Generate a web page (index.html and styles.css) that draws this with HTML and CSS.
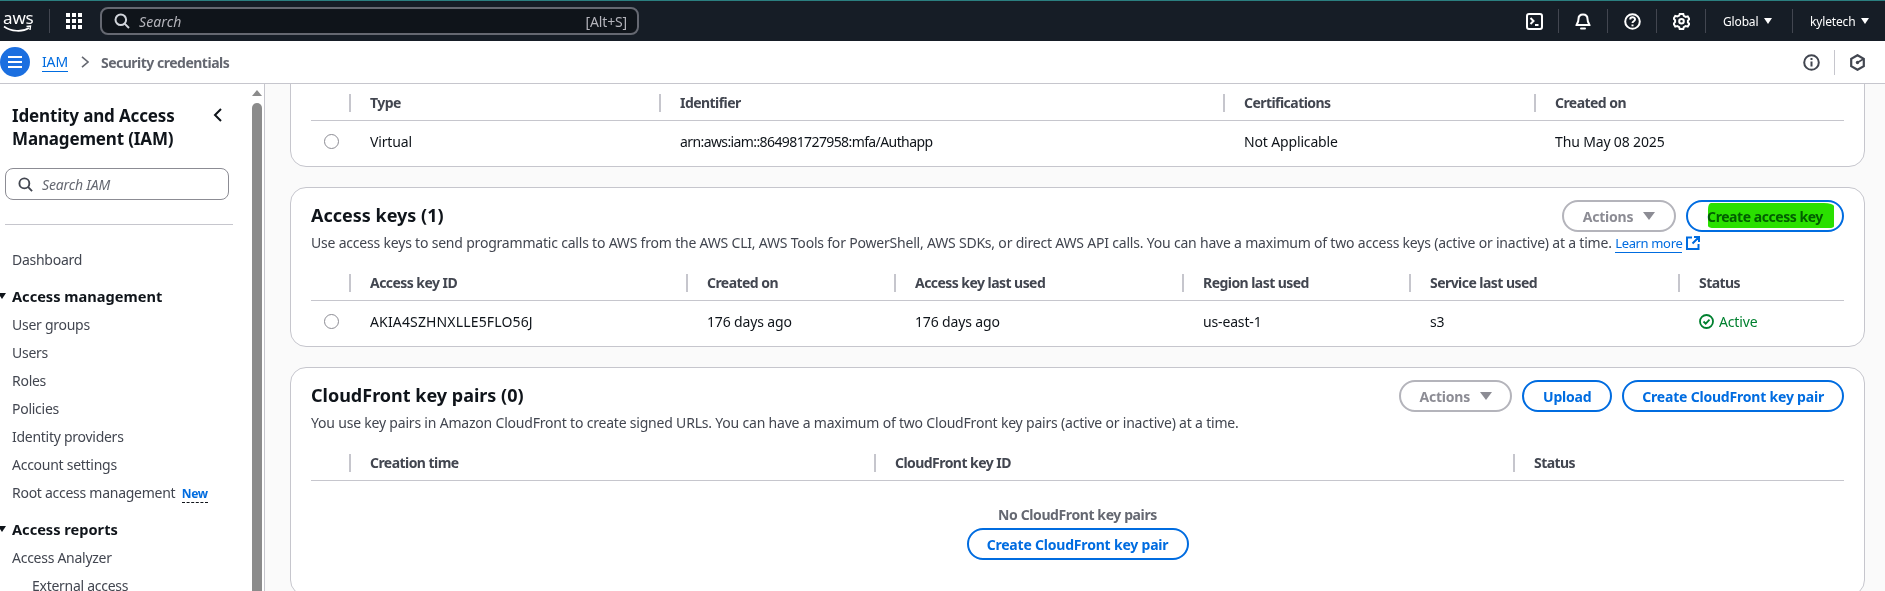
FILE: index.html
```html
<!DOCTYPE html>
<html lang="en">
<head>
  <meta charset="UTF-8">
  <title>Security credentials | IAM</title>
  <meta name="viewport" content="width=device-width, initial-scale=1.0">
  <link rel="stylesheet" href="styles.css">
</head>
<body>
  <header class="topbar">
    <div class="logo">
      <span class="logo-text">aws</span>
      <svg class="logo-smile" width="30" height="8" viewBox="0 0 30 8"><path d="M1 1.500c7 5 18 6 25 1.500" fill="none" stroke="#fff" stroke-width="1.600"/><path d="M23.500 1.500 27.500 1 27 5" fill="none" stroke="#fff" stroke-width="1.400"/></svg>
    </div>
    <span class="top-divider logo-divider"></span>
    <svg class="apps" width="16" height="16" viewBox="0 0 16 16" fill="#fff">
      <rect width="4" height="4"/><rect x="6" width="4" height="4"/><rect x="12" width="4" height="4"/>
      <rect y="6" width="4" height="4"/><rect x="6" y="6" width="4" height="4"/><rect x="12" y="6" width="4" height="4"/>
      <rect y="12" width="4" height="4"/><rect x="6" y="12" width="4" height="4"/><rect x="12" y="12" width="4" height="4"/>
    </svg>
    <div class="top-search">
      <svg width="16" height="16" viewBox="0 0 16 16" fill="none" stroke="#d1d5db" stroke-width="2"><circle cx="6.800" cy="6.800" r="5.300"/><path d="m10.600 10.600 4.400 4.400"/></svg>
      <span class="top-search-text">Search</span>
      <span class="top-search-key">[Alt+S]</span>
    </div>
    <div class="top-icons">
      <span class="top-icon">
        <svg width="17" height="17" viewBox="0 0 17 17" fill="none" stroke="#fff" stroke-width="2"><rect x="1" y="1" width="15" height="15" rx="2"/><path d="m4.500 5 3 3-3 3M9 12h3.500"/></svg>
      </span>
      <span class="top-divider"></span>
      <span class="top-icon">
        <svg width="16" height="17" viewBox="0 0 16 17" fill="none" stroke="#fff" stroke-width="2"><path d="M8 1.500c-3 0-4.500 2-4.500 4.500 0 3.500-2 5.500-2 6h13c0-.5-2-2.500-2-6 0-2.500-1.500-4.500-4.500-4.500Z"/><path d="M6 15.500h4" stroke-linecap="round"/></svg>
      </span>
      <span class="top-divider"></span>
      <span class="top-icon">
        <svg width="17" height="17" viewBox="0 0 17 17" fill="none" stroke="#fff" stroke-width="2"><circle cx="8.500" cy="8.500" r="7.300"/><path d="M6.200 6.500c0-3 4.800-3 4.800-.1 0 1.800-2.500 1.800-2.500 3.600"/><path d="M8.500 11.500v1.800"/></svg>
      </span>
      <span class="top-divider"></span>
      <span class="top-icon">
        <svg width="17" height="17" viewBox="0 0 17 17" fill="none" stroke="#fff" stroke-width="2"><path d="m6.700 1.200h3.600l.5 2 1.900 1 2-.6 1.700 3-1.500 1.400v2l1.500 1.400-1.700 3-2-.6-1.900 1-.5 2H6.700l-.5-2-1.900-1-2 .6-1.700-3L2.100 9.500v-2L.6 6.100l1.700-3 2 .6 1.900-1z" transform="translate(0 -.1) scale(1 .96)"/><circle cx="8.500" cy="8.200" r="2.300"/></svg>
      </span>
      <span class="top-divider"></span>
      <span class="top-menu region-menu">Global<span class="caret"></span></span>
      <span class="top-divider"></span>
      <span class="top-menu user-menu">kyletech<span class="caret"></span></span>
    </div>
  </header>

  <nav class="crumbbar">
    <span class="menu-btn">
      <svg width="16" height="14" viewBox="0 0 16 14" fill="none" stroke="#fff" stroke-width="2.200"><path d="M1 2h14M1 7h14M1 12h14"/></svg>
    </span>
    <a class="crumb-link">IAM</a>
    <svg class="crumb-sep" width="8" height="12" viewBox="0 0 8 12" fill="none" stroke="#656871" stroke-width="1.600"><path d="m1 .8 6 5.200-6 5.200"/></svg>
    <span class="crumb-current">Security credentials</span>
    <span class="crumb-tools">
      <svg width="17" height="17" viewBox="0 0 17 17" fill="none" stroke="#424650" stroke-width="2"><circle cx="8.500" cy="8.500" r="7.300"/><path d="M8.500 7.500v5M8.500 4v2"/></svg>
      <span class="tool-divider"></span>
      <svg width="15" height="17" viewBox="0 0 15 17" fill="none" stroke="#424650" stroke-width="2.200"><path d="M7.500 1.200 13.800 4.800v7.400l-6.300 3.600-6.300-3.600V4.800z"/><circle cx="7.500" cy="8.500" r="1.700" fill="#424650" stroke="none"/><path d="M7.500 8.500 13.500 5" stroke-width="1.600"/></svg>
    </span>
  </nav>

  <div class="workspace">
    <aside class="sidebar">
      <div class="side-content">
        <div class="side-head">
          <h2>Identity and Access Management (IAM)</h2>
          <svg width="10" height="14" viewBox="0 0 10 14" fill="none" stroke="#0f141a" stroke-width="2"><path d="M8 1 2 7l6 6"/></svg>
        </div>
        <div class="side-search">
          <svg width="15" height="15" viewBox="0 0 16 16" fill="none" stroke="#424650" stroke-width="2"><circle cx="6.800" cy="6.800" r="5.300"/><path d="m10.600 10.600 4.400 4.400"/></svg>
          <span>Search IAM</span>
        </div>
        <hr class="side-rule">
        <a class="side-link side-first">Dashboard</a>
        <div class="side-group">Access management</div>
        <a class="side-link">User groups</a>
        <a class="side-link">Users</a>
        <a class="side-link">Roles</a>
        <a class="side-link">Policies</a>
        <a class="side-link">Identity providers</a>
        <a class="side-link">Account settings</a>
        <a class="side-link">Root access management <span class="new-tag">New</span></a>
        <div class="side-group">Access reports</div>
        <a class="side-link">Access Analyzer</a>
        <a class="side-link side-sub">External access</a>
      </div>
      <div class="scrollbar">
        <span class="scroll-up"></span>
        <span class="scroll-thumb"></span>
      </div>
    </aside>

    <main class="main">
      <section class="card card-mfa">
        <div class="tbl cols-mfa">
          <div class="th"></div>
          <div class="th sep">Type</div>
          <div class="th sep">Identifier</div>
          <div class="th sep">Certifications</div>
          <div class="th sep">Created on</div>
          <div class="td"><span class="radio"></span></div>
          <div class="td">Virtual</div>
          <div class="td td-arn">arn:aws:iam::864981727958:mfa/Authapp</div>
          <div class="td">Not Applicable</div>
          <div class="td">Thu May 08 2025</div>
        </div>
      </section>

      <section class="card">
        <div class="card-head">
          <h3>Access keys (1)</h3>
          <div class="actions">
            <button class="btn btn-off btn-actions-wide">Actions<span class="caret caret-off"></span></button>
            <button class="btn btn-key">Create access key<span class="marker"></span></button>
          </div>
        </div>
        <p class="desc">Use access keys to send programmatic calls to AWS from the AWS CLI, AWS Tools for PowerShell, AWS SDKs, or direct AWS API calls. You can have a maximum of two access keys (active or inactive) at a time. <a class="learn">Learn more</a>
          <svg class="ext" width="14" height="14" viewBox="0 0 14 14" fill="none" stroke="#006ce0" stroke-width="2"><path d="M6 1.500H1v11.500h11.500V8M8 1h5v5M13 1 6.500 7.500"/></svg>
        </p>
        <div class="tbl cols-keys">
          <div class="th"></div>
          <div class="th sep">Access key ID</div>
          <div class="th sep">Created on</div>
          <div class="th sep">Access key last used</div>
          <div class="th sep">Region last used</div>
          <div class="th sep">Service last used</div>
          <div class="th sep">Status</div>
          <div class="td"><span class="radio"></span></div>
          <div class="td td-key">AKIA4SZHNXLLE5FLO56J</div>
          <div class="td">176 days ago</div>
          <div class="td">176 days ago</div>
          <div class="td">us-east-1</div>
          <div class="td">s3</div>
          <div class="td status">
            <svg width="15" height="15" viewBox="0 0 15 15" fill="none" stroke="#00802f" stroke-width="1.800"><circle cx="7.500" cy="7.500" r="6.500"/><path d="m4.500 7.500 2.200 2.200 3.800-4"/></svg>
            Active
          </div>
        </div>
      </section>

      <section class="card">
        <div class="card-head">
          <h3>CloudFront key pairs (0)</h3>
          <div class="actions">
            <button class="btn btn-off">Actions<span class="caret caret-off"></span></button>
            <button class="btn btn-upload">Upload</button>
            <button class="btn">Create CloudFront key pair</button>
          </div>
        </div>
        <p class="desc">You use key pairs in Amazon CloudFront to create signed URLs. You can have a maximum of two CloudFront key pairs (active or inactive) at a time.</p>
        <div class="tbl cols-cf">
          <div class="th"></div>
          <div class="th sep">Creation time</div>
          <div class="th sep">CloudFront key ID</div>
          <div class="th sep">Status</div>
        </div>
        <div class="empty">
          <strong>No CloudFront key pairs</strong>
          <button class="btn">Create CloudFront key pair</button>
        </div>
      </section>
    </main>
  </div>
</body>
</html>
```

FILE: styles.css
```css
* { box-sizing: border-box; }
html, body { height: 100%; }
body { margin: 0; height: 591px; overflow: hidden; display: flex; flex-direction: column; font-family: "Noto Sans", "Open Sans", Arial, sans-serif; font-size: 14px; letter-spacing: -.15px; color: #0f141a; background: #fff; }

/* top bar */
.topbar { height: 41px; flex: none; display: flex; align-items: center; background: #161d26; border-top: 1px solid #2b7f80; color: #fff; }
.logo { width: 30px; margin-left: 3px; height: 24px; position: relative; }
.logo-text { display: block; font-size: 17px; line-height: 17px; text-align: center; color: #fff; }
.logo-smile { position: absolute; left: 0; top: 16px; }
.top-divider { width: 1px; height: 24px; background: #424650; flex: none; }
.logo-divider { margin-left: 16px; }
.apps { margin-left: 16px; flex: none; }
.top-search { width: 539px; height: 28px; margin-left: 18px; display: flex; align-items: center; padding: 0 10px 0 12px; background: #0f141a; border: 2px solid #656871; border-radius: 8px; }
.top-search-text { margin-left: 9px; font-style: italic; color: #b4b4bb; font-size: 14px; letter-spacing: .1px; }
.top-search-key { margin-left: auto; color: #b4b4bb; font-size: 14px; }
.top-icons { margin-left: auto; display: flex; align-items: center; }
.top-icon { width: 48px; display: flex; justify-content: center; align-items: center; }
.top-menu { display: flex; align-items: center; font-size: 12px; color: #fff; }
.region-menu { width: 86px; padding-left: 17px; }
.user-menu { width: 92px; padding-left: 17px; }
.caret { width: 0; height: 0; margin-left: 6px; border-left: 4.5px solid transparent; border-right: 4.5px solid transparent; border-top: 6px solid #fff; }

/* breadcrumbs */
.crumbbar { height: 43px; flex: none; display: flex; align-items: center; background: #fff; border-bottom: 1px solid #c6c6cd; }
.menu-btn { width: 30px; height: 30px; display: flex; justify-content: center; align-items: center; border-radius: 50%; background: #1b6fe0; }
.crumb-link { margin-left: 12px; color: #006ce0; border-bottom: 1px solid #006ce0; line-height: 19px; }
.crumb-sep { margin-left: 13px; }
.crumb-current { margin-left: 12px; font-weight: 700; color: #656871; letter-spacing: -.5px; }
.crumb-tools { margin-left: auto; padding-right: 20px; display: flex; align-items: center; }
.tool-divider { width: 1px; height: 25px; margin: 0 15px 0 14px; background: #c6c6cd; }

/* sidebar */
.workspace { flex: 1; min-height: 0; display: flex; }
.sidebar { width: 265px; flex: none; display: flex; background: #fff; border-right: 1px solid #c6c6cd; overflow: hidden; }
.side-content { width: 252px; flex: none; padding-top: 20px; }
.side-head { display: flex; justify-content: space-between; align-items: flex-start; padding: 0 29px 0 12px; }
.side-head h2 { margin: 0; font-size: 17px; line-height: 23px; font-weight: 700; width: 180px; }
.side-head svg { margin-top: 4px; }
.side-search { width: 224px; height: 32px; margin: 18px 0 0 5px; display: flex; align-items: center; gap: 9px; padding-left: 12px; border: 1px solid #8c8c94; border-radius: 8px; font-style: italic; color: #656871; }
.side-rule { height: 1px; margin: 24px 19px 0 5px; border: 0; background: #c6c6cd; }
.side-link { display: block; height: 28px; line-height: 28px; padding-left: 12px; color: #424650; white-space: nowrap; letter-spacing: -.27px; }
.side-first { margin-top: 21px; }
.side-group { position: relative; height: 29px; line-height: 28px; margin-top: 8px; padding-left: 12px; font-size: 14.6px; font-weight: 700; white-space: nowrap; letter-spacing: 0; }
.side-group::before { content: ""; position: absolute; left: -2px; top: 11px; border-left: 4px solid transparent; border-right: 4px solid transparent; border-top: 6px solid #0f141a; }
.side-sub { padding-left: 32px; }
.new-tag { margin-left: 3px; color: #006ce0; font-size: 12px; font-weight: 700; border-bottom: 1px dashed #0f141a; }

.scrollbar { width: 10px; flex: none; display: flex; flex-direction: column; align-items: center; }
.scroll-up { margin-top: 6px; border-left: 5px solid transparent; border-right: 5px solid transparent; border-bottom: 6px solid #8b8b8b; }
.scroll-thumb { width: 10px; flex: 1; margin-top: 7px; background: #8b8b8b; border-radius: 5px 5px 0 0; }

/* main column */
.main { flex: 1; min-width: 0; overflow: hidden; padding: 0 20px 0 25px; background: #fafafa; }
.card { padding: 0 20px 5px; margin-bottom: 20px; background: #fff; border: 1px solid #c6c6cd; border-radius: 16px; }
.card-mfa { margin-top: -30px; padding-top: 26px; height: 113px; }
.card-head { height: 45px; padding-top: 12px; display: flex; justify-content: space-between; align-items: flex-start; }
.card-head h3 { margin: 0; padding-top: 3px; font-size: 18px; line-height: 24px; font-weight: 700; letter-spacing: 0; }
.actions { display: flex; gap: 10px; }
.btn { height: 32px; padding: 0 18px; display: inline-flex; align-items: center; justify-content: center; background: #fff; border: 2px solid #006ce0; border-radius: 20px; color: #006ce0; font: 700 14px "Noto Sans", "Open Sans", Arial, sans-serif; letter-spacing: -.2px; white-space: nowrap; }
.btn-off { width: 113px; padding: 0; border-color: #b4b4bb; color: #8c8c94; }
.btn-actions-wide { width: 114px; }
.btn-upload { width: 90px; padding: 0; }
.caret-off { margin-left: 10px; border-left-width: 6px; border-right-width: 6px; border-top: 8px solid #8c8c94; }
.btn-key { position: relative; width: 158px; padding: 0; letter-spacing: -.45px; }
.marker { position: absolute; left: 20px; top: 1px; width: 126px; height: 25px; background: #2ae000; border-radius: 3px 10px 5px 6px / 6px 3px 2px 2px; mix-blend-mode: multiply; }
.desc { margin: 0; height: 28px; line-height: 20px; color: #424650; white-space: nowrap; letter-spacing: -.2px; }
.learn { color: #006ce0; font-size: 13px; letter-spacing: -.35px; border-bottom: 1px solid #006ce0; }
.ext { vertical-align: -2px; }

/* tables */
.tbl { display: grid; margin: 0; }
.cols-mfa { grid-template-columns: 38px 310px 564px 311px 1fr; }
.cols-keys { grid-template-columns: 38px 337px 208px 288px 227px 269px 1fr; }
.cols-cf { grid-template-columns: 38px 525px 639px 1fr; }
.th { position: relative; height: 40px; padding: 3px 0 0 21px; display: flex; align-items: center; font-weight: 700; letter-spacing: -.55px; color: #424650; border-bottom: 1px solid #c6c6cd; white-space: nowrap; }
.th.sep::before { content: ""; position: absolute; left: 0; top: 13px; width: 2px; height: 18px; background: #c6c6cd; }
.td { height: 40px; padding-left: 21px; display: flex; align-items: center; white-space: nowrap; }
.td:has(.radio) { padding-left: 13px; }
.td-arn { letter-spacing: -.6px; }
.td-key { letter-spacing: .15px; }
.radio { width: 15px; height: 15px; border: 1px solid #8c8c94; border-radius: 50%; background: #fff; }
.status { gap: 5px; color: #00802f; }

.empty { height: 109px; padding-top: 24px; display: flex; flex-direction: column; align-items: center; gap: 3px; }
.empty strong { line-height: 20px; color: #656871; letter-spacing: -.4px; }
.empty .btn { width: 222px; padding: 0; }
```
